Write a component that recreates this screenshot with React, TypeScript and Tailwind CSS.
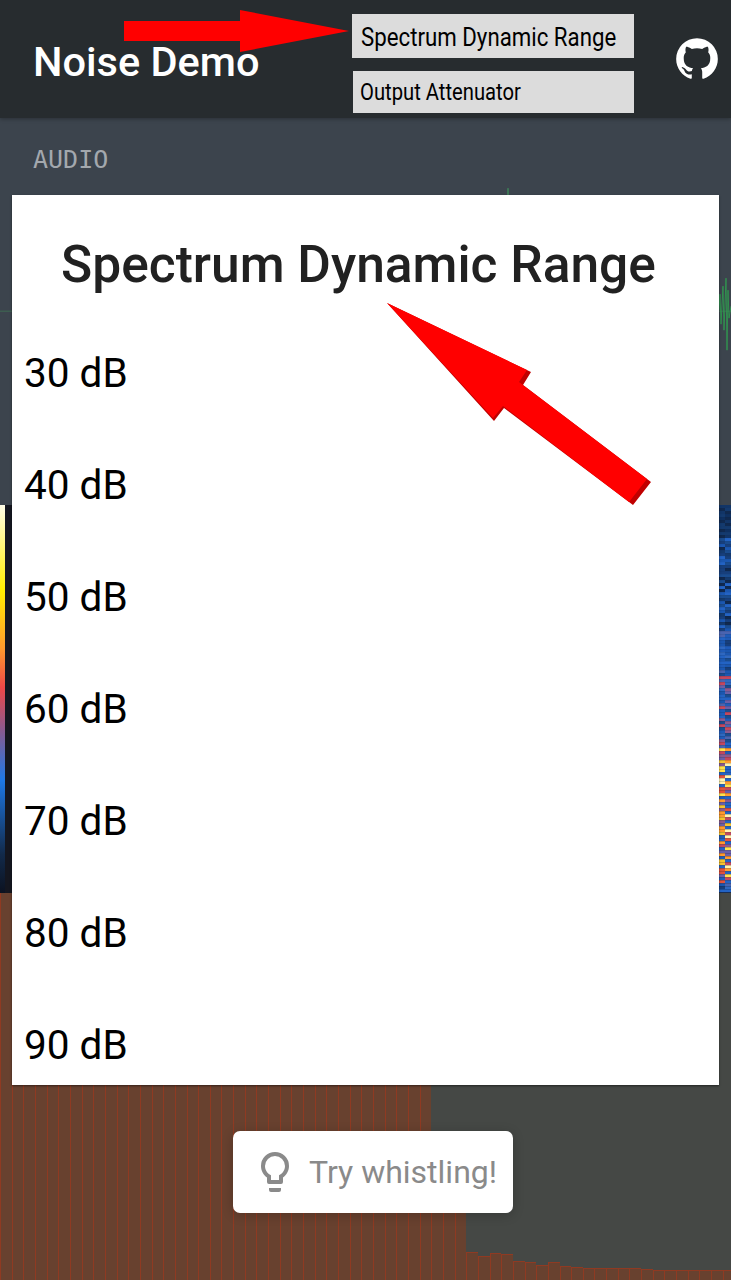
const RANGES = ['30 dB', '40 dB', '50 dB', '60 dB', '70 dB', '80 dB', '90 dB'];

// spectrum bar heights, left to right
const TAIL = [28, 24, 27, 26, 19, 18, 15, 18, 14, 13, 12, 12, 12, 12, 12, 11, 10, 10, 10, 10, 10, 10, 10];
const BARS = [...Array(37).fill(388), 140, 140, 140, ...TAIL];

const SPECTRO_COLORS = {
  deep: ['#10294f', '#143a6e', '#0f3060', '#123567'],
  low: ['#143a6e', '#1a4c8f', '#173f7c', '#1b57b0', '#10294f', '#2363c4'],
  mid: ['#1b57b0', '#2363c4', '#1a4c8f', '#2f68c0', '#4a64b0', '#1f5bb8', '#173f7c'],
  warm: ['#2363c4', '#1b57b0', '#6a5fa8', '#c2485f', '#1f5bb8', '#8a5a90', '#2f68c0', '#1a4c8f', '#4a64b0'],
  hot: ['#f4c430', '#2363c4', '#e0523c', '#ff9a2e', '#8a5a90', '#2363c4', '#ffe14d', '#c2485f', '#1f5bb8', '#6a5fa8', '#fff3b0'],
};

function spectroRows() {
  const rows: { y: number; a: string; b: string }[] = [];
  let seed = 17;
  const next = () => {
    seed = (seed * 9301 + 49297) % 233280;
    return seed / 233280;
  };
  for (let y = 0; y < 387; y += 3) {
    let set = SPECTRO_COLORS.deep;
    if (y > 30) set = SPECTRO_COLORS.low;
    if (y > 120) set = SPECTRO_COLORS.mid;
    if (y > 170) set = SPECTRO_COLORS.warm;
    if (y > 240) set = SPECTRO_COLORS.hot;
    if (y > 375) set = SPECTRO_COLORS.mid;
    rows.push({ y, a: set[Math.floor(next() * set.length)], b: set[Math.floor(next() * set.length)] });
  }
  return rows;
}

function Waveform() {
  return (
    <div className="relative flex-1 bg-[#3c444d]">
      <svg className="block w-full h-full" viewBox="0 0 731 387">
        <path d="M0 193H731" stroke="#3f6b52" strokeWidth="1" />
        <path d="M508 70V77" stroke="#3fa55f" strokeWidth="1" />
        <path
          d="M719 192L720 176L721 206L723 168L724 212L726 160L727 232L728 172L729 200L731 188"
          fill="none"
          stroke="#2f9e4f"
          strokeWidth="0.8"
        />
      </svg>
      <span className="absolute left-[33px] top-[27px] font-['DejaVu_Sans_Mono',monospace] text-[25px] leading-[30px] font-light text-[#a3a8ad]">
        AUDIO
      </span>
    </div>
  );
}

function Spectrogram() {
  return (
    <div className="flex flex-1 bg-[#14161f]">
      <div className="w-[5px] bg-[linear-gradient(to_bottom,#fffde8,#ffee00_22%,#ff9a2e_37%,#f04848_47%,#8a5a90_58%,#1e78e6_71%,#122a4a_90%,#0c1220)]" />
      <svg className="block flex-1 h-full" viewBox="5 0 726 387" preserveAspectRatio="none">
        {spectroRows().map((r) => (
          <g key={r.y}>
            <rect x="719" y={r.y} width="6" height="3" fill={r.a} />
            <rect x="725" y={r.y} width="6" height="3" fill={r.b} />
          </g>
        ))}
      </svg>
    </div>
  );
}

function Spectrum() {
  return (
    <div className="flex flex-1 items-end overflow-hidden bg-[#454845]">
      {BARS.map((h, i) => (
        <div
          key={i}
          className="w-[11.667px] shrink-0 border-l border-t border-[#8f3a22] bg-[#68412f]"
          style={{ height: h }}
        />
      ))}
    </div>
  );
}

export default function App() {
  return (
    <div className="relative flex h-[1280px] w-[731px] flex-col overflow-hidden font-[Roboto,sans-serif]">
      {/* Header */}
      <header className="relative z-10 flex h-[118px] shrink-0 items-center bg-[#272c2f] shadow-[0_1px_4px_rgba(0,0,0,0.3)]">
        <h1 className="w-[352px] shrink-0 pl-[33px] pt-[5px] text-[41.5px] font-medium leading-none text-white">Noise Demo</h1>
        <div className="flex w-[282px] shrink-0 flex-col gap-[13px] pt-[8px]">
          <button className="h-[44px] bg-[#dcdcdc] pl-[9px] pt-[4px] text-left leading-none text-black">
            <span className="inline-block origin-left scale-x-[0.89] whitespace-nowrap text-[25px]">Spectrum Dynamic Range</span>
          </button>
          <button className="ml-[1px] h-[42px] bg-[#dcdcdc] pl-[7px] pt-[2px] text-left leading-none text-black">
            <span className="inline-block origin-left scale-x-[0.86] whitespace-nowrap text-[23.5px]">Output Attenuator</span>
          </button>
        </div>
        <svg className="ml-[38px] h-[50px] w-[50px] shrink-0 fill-white" viewBox="0 0 24 24">
          <path d="M12,2A10,10 0 0,0 2,12C2,16.42 4.87,20.17 8.84,21.5C9.34,21.58 9.5,21.27 9.5,21V19.31C6.73,19.91 6.14,17.97 6.14,17.97C5.68,16.81 5.03,16.5 5.03,16.5C4.12,15.88 5.1,15.9 5.1,15.9C6.1,15.97 6.63,16.93 6.63,16.93C7.5,18.45 8.97,18 9.54,17.76C9.63,17.11 9.89,16.67 10.17,16.42C7.95,16.17 5.62,15.31 5.62,11.5C5.62,10.39 6,9.5 6.65,8.79C6.55,8.54 6.2,7.5 6.75,6.15C6.75,6.15 7.59,5.88 9.5,7.17C10.29,6.95 11.15,6.84 12,6.84C12.85,6.84 13.71,6.95 14.5,7.17C16.41,5.88 17.25,6.15 17.25,6.15C17.8,7.5 17.45,8.54 17.35,8.79C18,9.5 18.38,10.39 18.38,11.5C18.38,15.32 16.04,16.16 13.81,16.41C14.17,16.72 14.5,17.33 14.5,18.26V21C14.5,21.27 14.66,21.59 15.17,21.5C19.14,20.16 22,16.42 22,12A10,10 0 0,0 12,2Z" />
        </svg>
      </header>

      {/* Panels */}
      <main className="flex flex-1 flex-col">
        <Waveform />
        <Spectrogram />
        <Spectrum />
      </main>

      {/* Range dialog */}
      <div className="absolute left-[12px] top-[195px] z-20 h-[890px] w-[707px] overflow-hidden bg-white shadow-[0_1px_2px_rgba(0,0,0,0.5)]">
        <h2 className="flex h-[122px] items-center justify-center pr-[14px] pt-[17px] text-[51.5px] font-medium leading-none text-[#212121]">
          Spectrum Dynamic Range
        </h2>
        {RANGES.map((r) => (
          <div key={r} className="flex h-[112px] items-center pl-[12px] text-[40.5px] leading-none text-black">
            {r}
          </div>
        ))}
      </div>

      {/* Hint toast */}
      <div className="absolute left-[233px] top-[1131px] z-20 flex h-[82px] w-[280px] items-center rounded-[7px] bg-white pl-[18px] shadow-[0_2px_12px_rgba(0,0,0,0.2)]">
        <svg className="h-[48px] w-[48px] shrink-0 fill-[#8a8a8a]" viewBox="0 0 24 24">
          <path d="M12,2A7,7 0 0,1 19,9C19,11.38 17.81,13.47 16,14.74V17A1,1 0 0,1 15,18H9A1,1 0 0,1 8,17V14.74C6.19,13.47 5,11.38 5,9A7,7 0 0,1 12,2M9,21V20H15V21A1,1 0 0,1 14,22H10A1,1 0 0,1 9,21M12,4A5,5 0 0,0 7,9C7,11.05 8.23,12.81 10,13.58V16H14V13.58C15.77,12.81 17,11.05 17,9A5,5 0 0,0 12,4Z" />
        </svg>
        <span className="ml-[10px] text-[32px] leading-none text-[#8a8a8a]">Try whistling!</span>
      </div>

      {/* Annotation arrows */}
      <svg className="pointer-events-none absolute left-0 top-0 z-30 h-[1280px] w-[731px]" viewBox="0 0 731 1280">
        <polygon points="124,21 240,21 240,10 349,31 240,52 240,41 124,41" fill="#ff0000" />
        <polygon points="387,303 531,372 523,385 651,482 633,505 504,408 494,421" fill="#c00000" />
        <polygon points="387,303 527,370 519,382 647,479 629,502 503,406 493,418" fill="#ff0000" />
      </svg>
    </div>
  );
}
